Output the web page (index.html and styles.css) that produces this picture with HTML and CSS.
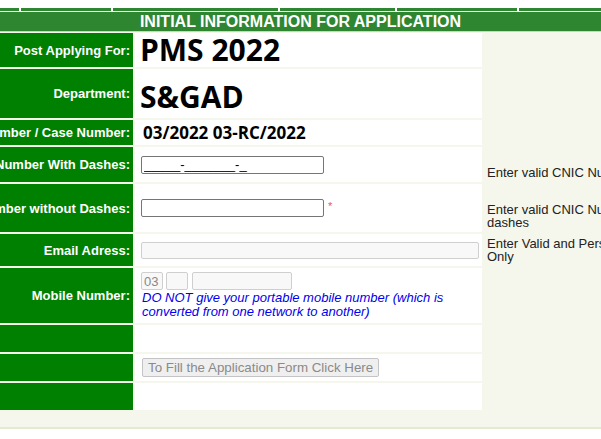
FILE: index.html
```html
<!DOCTYPE html>
<html lang="en">
<head>
  <meta charset="UTF-8">
  <meta name="viewport" content="width=device-width, initial-scale=1.0">
  <title>Initial Information for Application</title>
  <link rel="stylesheet" href="styles.css">
</head>

<body>
  <!-- Bottom edge of the menu bar -->
  <div class="menu-strip">
    <span class="menu-cell menu-1"></span>
    <span class="menu-cell menu-2"></span>
    <span class="menu-cell menu-3"></span>
    <span class="menu-cell menu-4"></span>
    <span class="menu-cell menu-5"></span>
    <span class="menu-cell menu-6"></span>
  </div>

  <div class="container">
    <h2 class="form-title">INITIAL INFORMATION FOR APPLICATION</h2>

    <form id="initial-form" class="form-rows">
      <div class="row row-post">
        <div class="label"><span>Post Applying For:</span></div>
        <div class="value"><span class="big-value">PMS 2022</span></div>
      </div>

      <div class="row row-dept">
        <div class="label"><span>Department:</span></div>
        <div class="value"><span class="big-value dept">S&amp;GAD</span></div>
      </div>

      <div class="row row-case">
        <div class="label"><span>Advertisement Number / Case Number:</span></div>
        <div class="value"><span class="case-value">03/2022 03-RC/2022</span></div>
      </div>

      <div class="row row-cnic">
        <div class="label"><span>CNIC Number With Dashes:</span></div>
        <div class="value">
          <input type="text" id="cnic-dashes" class="field" value="_____-_______-_">
        </div>
        <div class="hint">Enter valid CNIC Number with dashes</div>
      </div>

      <div class="row row-cnic2">
        <div class="label"><span>CNIC Number without Dashes:</span></div>
        <div class="value">
          <input type="text" id="cnic-plain" class="field">
          <span class="required">*</span>
        </div>
        <div class="hint">Enter valid CNIC Number without dashes</div>
      </div>

      <div class="row row-email">
        <div class="label"><span>Email Adress:</span></div>
        <div class="value">
          <input type="email" id="email" class="field field-off field-email">
        </div>
        <div class="hint">Enter Valid and Personal Email ID Only</div>
      </div>

      <div class="row row-mobile">
        <div class="label"><span>Mobile Number:</span></div>
        <div class="value value-stack">
          <div class="mobile-fields">
            <input type="text" class="field field-off field-short" value="03">
            <input type="text" class="field field-off field-short">
            <input type="text" class="field field-off field-long">
          </div>
          <p class="mobile-note">DO NOT give your portable mobile number (which is converted from one network to another)</p>
        </div>
      </div>

      <div class="row row-empty">
        <div class="label"></div>
        <div class="value"></div>
      </div>

      <div class="row row-empty">
        <div class="label"></div>
        <div class="value">
          <button type="submit" class="fill-btn" disabled>To Fill the Application Form Click Here</button>
        </div>
      </div>

      <div class="row row-empty">
        <div class="label"></div>
        <div class="value"></div>
      </div>
    </form>
  </div>
</body>
</html>
```

FILE: styles.css
```css
body {
  font-family: "Liberation Sans", Arial, sans-serif;
  background-color: white;
  margin: 0;
  overflow: hidden;
}

.menu-strip {
  display: flex;
  gap: 2px;
  margin-top: 8px;
  height: 3px;
}

.menu-cell {
  background: #2f8630;
  flex: none;
}

.menu-1 { width: 19px; }
.menu-2 { width: 90px; }
.menu-3 { width: 165px; }
.menu-4 { width: 115px; }
.menu-5 { width: 120px; }
.menu-6 { flex: 1; }

.container {
  background: #f5f7ed;
  padding: 1px 0 17px;
  border-bottom: 2px solid #e2ebd2;
}

.form-title {
  margin: 0;
  height: 19px;
  line-height: 19px;
  background: #2f8630;
  border-bottom: 1px solid #cfcfcf;
  color: white;
  font-size: 16px;
  font-weight: bold;
  text-align: center;
}

.form-rows {
  display: flex;
  flex-direction: column;
  gap: 2px;
  margin: 1px 0 0;
}

.row {
  display: flex;
}

.row-post { height: 34px; }
.row-dept { height: 49px; }
.row-case { height: 25px; }
.row-cnic { height: 35px; }
.row-cnic2 { height: 48px; }
.row-email { height: 32px; }
.row-mobile { height: 55px; }
.row-empty { height: 27px; }

.label {
  flex: none;
  width: 133px;
  padding-right: 3px;
  box-sizing: border-box;
  background: #008000;
  color: white;
  font-size: 13px;
  font-weight: bold;
  white-space: nowrap;
  display: flex;
  justify-content: flex-end;
  align-items: center;
}

.value {
  flex: none;
  width: 347px;
  margin-left: 2px;
  padding-left: 6px;
  box-sizing: border-box;
  background: white;
  display: flex;
  align-items: center;
}

.value-stack {
  flex-direction: column;
  align-items: flex-start;
  justify-content: center;
}

.hint {
  flex: none;
  width: 228px;
  align-self: flex-end;
  padding: 0 0 3px 5px;
  box-sizing: border-box;
  font-size: 13px;
  line-height: 13px;
  color: #222;
}

.big-value {
  font-family: "Open Sans", sans-serif;
  font-weight: bold;
  font-size: 30px;
  line-height: 1;
  margin-left: -1px;
  color: black;
}

.dept {
  margin-top: 6px;
}

.case-value {
  font-family: "Open Sans", sans-serif;
  font-weight: bold;
  font-size: 17px;
  margin-left: 2px;
  color: black;
}

.field {
  width: 183px;
  height: 18px;
  box-sizing: border-box;
  padding: 0 2px;
  border: 1px solid #767676;
  border-radius: 2px;
  font-family: "Liberation Sans", Arial, sans-serif;
  font-size: 13px;
  color: black;
  background: white;
}

.field-off {
  border-color: #cfcfcf;
  background: #f8f8f8;
  color: #888;
}

.field-email {
  width: 338px;
  height: 17px;
}

.field-short {
  width: 22px;
}

.field-long {
  width: 100px;
  margin-left: 1px;
}

.required {
  color: #f05a3c;
  font-size: 11px;
  margin-left: 4px;
  align-self: flex-start;
  margin-top: 16px;
}

.mobile-fields {
  display: flex;
  gap: 3px;
}

.mobile-note {
  margin: 1px 0 0 1px;
  font-size: 13px;
  line-height: 14px;
  font-style: italic;
  color: #0000ee;
}

.fill-btn {
  height: 19px;
  padding: 0 5px;
  margin-left: 1px;
  border: 1px solid #c4c4c4;
  border-radius: 2px;
  background: #efefef;
  color: #8a8a8a;
  font-family: "Liberation Sans", Arial, sans-serif;
  font-size: 13.33px;
}
```
